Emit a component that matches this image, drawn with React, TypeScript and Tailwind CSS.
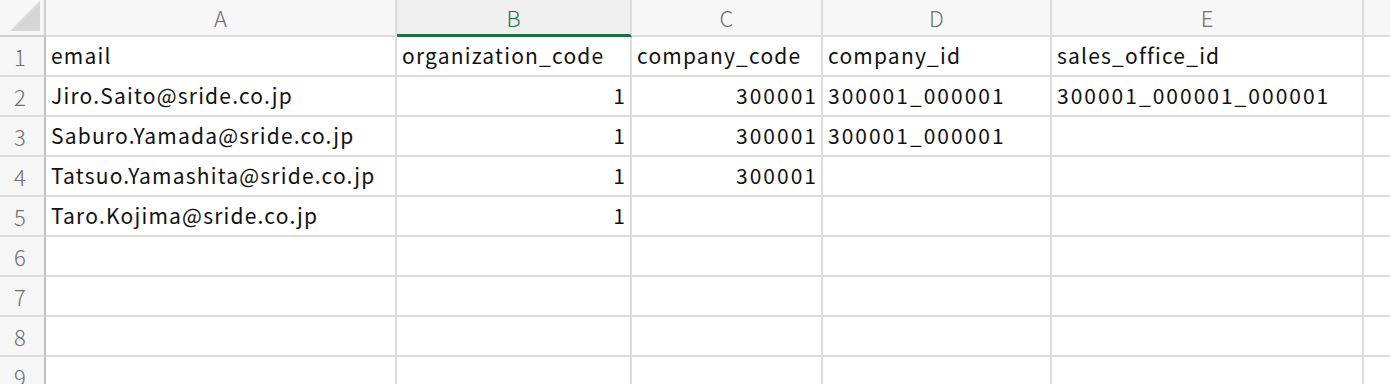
import { FunctionComponent } from "react";

const cols = [
  { key: "A", width: "w-[351px]" },
  { key: "B", width: "w-[235px]" },
  { key: "C", width: "w-[191px]" },
  { key: "D", width: "w-[229px]" },
  { key: "E", width: "w-[312px]" },
];

type Cell = { v: string; num?: boolean; digits?: boolean };

const rows: Cell[][] = [
  [{ v: "email" }, { v: "organization_code" }, { v: "company_code" }, { v: "company_id" }, { v: "sales_office_id" }],
  [
    { v: "Jiro.Saito@sride.co.jp" },
    { v: "1", num: true, digits: true },
    { v: "300001", num: true, digits: true },
    { v: "300001_000001", digits: true },
    { v: "300001_000001_000001", digits: true },
  ],
  [
    { v: "Saburo.Yamada@sride.co.jp" },
    { v: "1", num: true, digits: true },
    { v: "300001", num: true, digits: true },
    { v: "300001_000001", digits: true },
    { v: "" },
  ],
  [
    { v: "Tatsuo.Yamashita@sride.co.jp" },
    { v: "1", num: true, digits: true },
    { v: "300001", num: true, digits: true },
    { v: "" },
    { v: "" },
  ],
  [{ v: "Taro.Kojima@sride.co.jp" }, { v: "1", num: true, digits: true }, { v: "" }, { v: "" }, { v: "" }],
  [{ v: "" }, { v: "" }, { v: "" }, { v: "" }, { v: "" }],
  [{ v: "" }, { v: "" }, { v: "" }, { v: "" }, { v: "" }],
  [{ v: "" }, { v: "" }, { v: "" }, { v: "" }, { v: "" }],
  [{ v: "" }, { v: "" }, { v: "" }, { v: "" }, { v: "" }],
];

const font = "font-['Noto_Sans_CJK_JP','Noto_Sans',sans-serif]";

const App: FunctionComponent = () => {
  return (
    <div className={`w-[1390px] h-[384px] overflow-hidden bg-white ${font}`}>
      {/* column headers */}
      <div className="flex h-[37px]">
        <div className="w-[46px] shrink-0 relative bg-[#f6f6f6] border-r-2 border-b-2 border-[#cfcfcf]">
          <div className="absolute right-[4px] bottom-[4px] w-0 h-0 border-l-[30px] border-l-transparent border-b-[30px] border-b-[#d6d6d6]" />
        </div>
        {cols.map((c) => (
          <div
            key={c.key}
            className={`${c.width} shrink-0 flex items-center justify-center text-[22px] font-light border-r-2 ${
              c.key === "B"
                ? "bg-[#efefef] text-[#1e7145] border-b-[3px] border-b-[#1e7145] border-r-[#dcdcdc]"
                : "bg-[#f7f7f7] text-[#6e6e6e] border-b-2 border-[#dcdcdc]"
            }`}
          >
            {c.key}
          </div>
        ))}
        <div className="flex-1 bg-[#f7f7f7] border-b-2 border-[#dcdcdc]" />
      </div>
      {rows.map((r, i) => (
        <div key={i} className="flex h-[40px]">
          <div className="w-[46px] shrink-0 flex items-center justify-center pr-[4px] bg-[#f6f6f6] text-[22px] font-light text-[#6e6e6e] border-r-2 border-r-[#bdbdbd] border-b-2 border-b-[#dcdcdc]">
            {i + 1}
          </div>
          {r.map((cell, j) => (
            <div
              key={j}
              className={`${cols[j].width} shrink-0 flex items-center text-[21px] text-[#111] whitespace-nowrap border-r-2 border-b-2 border-[#dcdcdc] ${
                cell.digits ? "tracking-[2px]" : "tracking-[1.2px]"
              } ${cell.num ? "justify-end pl-[5px] pr-[3px]" : "justify-start px-[5px]"}`}
            >
              {cell.v}
            </div>
          ))}
          <div className="flex-1 border-b-2 border-[#dcdcdc]" />
        </div>
      ))}
    </div>
  );
};

export default App;
